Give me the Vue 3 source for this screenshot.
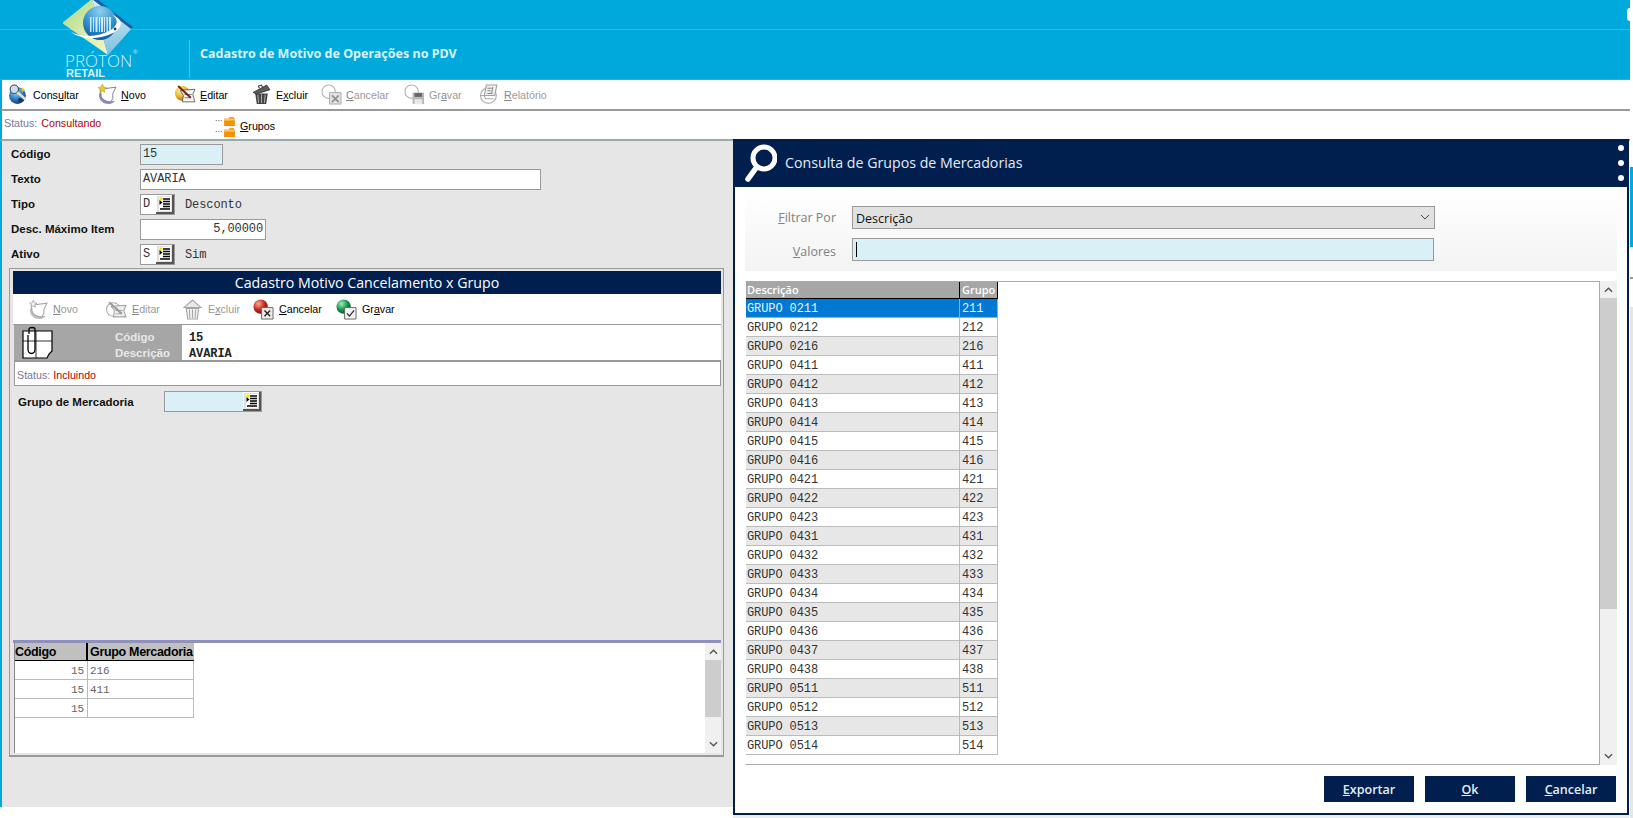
<script setup>
const mainTools = [
  { icon: 'globe', a: 'Cons', u: 'u', b: 'ltar', w: 88 },
  { icon: 'novo', a: '', u: 'N', b: 'ovo', w: 79 },
  { icon: 'edit', a: '', u: 'E', b: 'ditar', w: 76 },
  { icon: 'trash', a: 'E', u: 'x', b: 'cluir', w: 70 },
  { icon: 'gcancel', a: '', u: 'C', b: 'ancelar', w: 83, off: true },
  { icon: 'gsave', a: 'Gr', u: 'a', b: 'var', w: 75, off: true },
  { icon: 'greport', a: '', u: 'R', b: 'elatório', w: 80, off: true }
]
const subTools = [
  { icon: 'gnovo', a: '', u: 'N', b: 'ovo', w: 79, off: true },
  { icon: 'gedit', a: '', u: 'E', b: 'ditar', w: 76, off: true },
  { icon: 'gtrash', a: 'E', u: 'x', b: 'cluir', w: 71, off: true },
  { icon: 'rcancel', a: '', u: 'C', b: 'ancelar', w: 83 },
  { icon: 'gokay', a: 'Gr', u: 'a', b: 'var', w: 75 }
]
const codes = ['211','212','216','411','412','413','414','415','416','421','422','423','431','432','433','434','435','436','437','438','511','512','513','514']
const small = [['15', '216'], ['15', '411'], ['15', '']]
</script>

<template>
  <div class="screen">
    <svg class="defs" width="0" height="0">
      <defs>
        <radialGradient id="gBlue" cx="40%" cy="30%" r="75%"><stop offset="0" stop-color="#9fd0ee"/><stop offset=".55" stop-color="#2c7fc4"/><stop offset="1" stop-color="#12306f"/></radialGradient>
        <radialGradient id="gLogo" cx="50%" cy="15%" r="85%"><stop offset="0" stop-color="#8fd0ee"/><stop offset=".6" stop-color="#2f8fcc"/><stop offset="1" stop-color="#125a9c"/></radialGradient>
        <radialGradient id="gRed" cx="35%" cy="30%" r="75%"><stop offset="0" stop-color="#f3b0a0"/><stop offset=".55" stop-color="#c8281c"/><stop offset="1" stop-color="#6c0f0c"/></radialGradient>
        <radialGradient id="gGreen" cx="35%" cy="30%" r="75%"><stop offset="0" stop-color="#a8e8b8"/><stop offset=".55" stop-color="#149a4c"/><stop offset="1" stop-color="#075028"/></radialGradient>
        <radialGradient id="gYel" cx="35%" cy="30%" r="75%"><stop offset="0" stop-color="#fff0a0"/><stop offset=".6" stop-color="#e8b020"/><stop offset="1" stop-color="#a06a10"/></radialGradient>
        <linearGradient id="gDiaL" x1="0" y1="0" x2="1" y2="1"><stop offset="0" stop-color="#a9d487"/><stop offset=".6" stop-color="#dfeeb0"/><stop offset="1" stop-color="#f2f4c4"/></linearGradient>
        <linearGradient id="gDiaR" x1="0" y1="0" x2="0" y2="1"><stop offset="0" stop-color="#d8eef8"/><stop offset="1" stop-color="#7cc0e0"/></linearGradient>
      </defs>
      <symbol id="globe" viewBox="0 0 20 20">
        <circle cx="9" cy="11" r="8" fill="url(#gBlue)"/>
        <path d="M3 7c2-3 5-3 6-1s-2 3-3 2-2 1-3-1zM10 14c2-1 4 0 4 1s-2 2-3 2-2-2-1-3z" fill="#1a2b66"/>
        <circle cx="6" cy="5" r="4" fill="#cfdde8" stroke="#33445f"/>
        <path d="M9 8l8 7" stroke="#e8e4c8" stroke-width="2.4"/>
        <path d="M14 3l1 2 2 .5-2 .8-1 2-.8-2L11 5.500l2-.5z" fill="#f2c419"/>
      </symbol>
      <symbol id="novo" viewBox="0 0 20 20">
        <path d="M3 9c-1 6 3 10 9 10 3 0 5-1 6-3-4 1-9 0-11-3-1-2-1-4 0-6z" fill="#8d8ac8"/>
        <path d="M4 5l15-2-3 6 0 5-2 3c-4 0-8-2-9-5z" fill="#fff" stroke="#6b6b7c" stroke-width=".8"/>
        <path d="M6 0l1.200 2.800L10 3.500 7.800 5.200 8.300 8 6 6.500 3.700 8l.5-2.800L2 3.500l2.800-.7z" fill="#f2cb25" stroke="#8a7a20" stroke-width=".4"/>
      </symbol>
      <symbol id="edit" viewBox="0 0 20 20">
        <circle cx="7" cy="9" r="7" fill="url(#gYel)"/>
        <path d="M5 6l14-1-2 5 2 7-12 0 1-6z" fill="#f4f4ee" stroke="#555" stroke-width=".8"/>
        <path d="M9 10h7M9 13h6" stroke="#888"/>
        <path d="M3 2l12 11" stroke="#7a2418" stroke-width="2"/>
      </symbol>
      <symbol id="trash" viewBox="0 0 20 20">
        <path d="M4 9h12l-1.500 10h-9z" fill="#444"/>
        <path d="M6.500 10l.7 8M10 10v8M13.500 10l-.7 8" stroke="#aaa"/>
        <path d="M2 8L15 1l3 4.500L5 9.500z" fill="#5c5c5c" stroke="#222" stroke-width=".7"/>
        <path d="M8 4l-1-2 3-1 1 2" fill="none" stroke="#333"/>
      </symbol>
      <symbol id="gcancel" viewBox="0 0 22 22">
        <circle cx="8" cy="8" r="7" fill="none" stroke="#b4b4b4" stroke-width="1.200"/>
        <path d="M9 9h12v12H9z" fill="#e2e2e2" stroke="#a8a8a8"/>
        <path d="M11.500 12l7 7M18.500 12l-7 7" stroke="#8f8f8f" stroke-width="1.800"/>
      </symbol>
      <symbol id="gsave" viewBox="0 0 22 22">
        <circle cx="8" cy="8" r="7" fill="none" stroke="#b4b4b4" stroke-width="1.200"/>
        <path d="M9 9h12v12H9z" fill="#b8b8b8"/>
        <path d="M11 9.500h8v4h-8z" fill="#666"/>
        <path d="M11 16h8v5h-8z" fill="#e8e8e8"/>
      </symbol>
      <symbol id="greport" viewBox="0 0 20 20">
        <circle cx="9" cy="11" r="7.500" fill="none" stroke="#b4b4b4" stroke-width="1.200"/>
        <path d="M1 11h4l1 3h8" fill="none" stroke="#aaa"/>
        <path d="M7 1h10l-2 10H5z" fill="#eee" stroke="#a0a0a0"/>
        <path d="M8 4h4M8 6.500h3M8 9h5M13 3l-1 6" stroke="#8c8c8c"/>
      </symbol>
      <symbol id="gnovo" viewBox="0 0 20 20">
        <path d="M3 9c-1 6 3 10 9 10 3 0 5-1 6-3-4 1-9 0-11-3-1-2-1-4 0-6z" fill="#bdbdbd"/>
        <path d="M4 6l15-2-3 6v4l-2 3c-4 0-8-2-9-5z" fill="#fff" stroke="#a6a6a6"/>
        <path d="M6 1l1 2.500 2.500.5-2 1.500.5 2.500L6 6.500 4 8l.5-2.500-2-1.500L5 3.500z" fill="#f2f2f2" stroke="#a0a0a0" stroke-width=".7"/>
      </symbol>
      <symbol id="gedit" viewBox="0 0 20 20">
        <circle cx="7" cy="10" r="6.500" fill="none" stroke="#aaa"/>
        <path d="M5 7l14-1-2 5 2 6-12 0 1-6z" fill="#eee" stroke="#a4a4a4"/>
        <path d="M9 11h7M9 14h6" stroke="#aaa"/>
        <path d="M3 3l12 11" stroke="#999" stroke-width="2"/>
      </symbol>
      <symbol id="gtrash" viewBox="0 0 20 20">
        <path d="M4 9h12l-1.500 10h-9z" fill="#f2f2f2" stroke="#a5a5a5"/>
        <path d="M7 10l.5 8M10 10v8M13 10l-.5 8" stroke="#a5a5a5"/>
        <path d="M2 8l8-7 8 7z" fill="#e8e8e8" stroke="#a5a5a5"/>
      </symbol>
      <symbol id="rcancel" viewBox="0 0 22 22">
        <circle cx="8" cy="8" r="7.500" fill="url(#gRed)"/>
        <path d="M9 9h12v12H9z" fill="#ececec" stroke="#666"/>
        <path d="M12 12l6 6M18 12l-6 6" stroke="#222" stroke-width="1.400"/>
      </symbol>
      <symbol id="gokay" viewBox="0 0 22 22">
        <circle cx="8" cy="8" r="7.500" fill="url(#gGreen)"/>
        <path d="M9 9h12v12H9z" fill="#f2f2f2" stroke="#666"/>
        <path d="M11.500 15l2.500 3 5-6" fill="none" stroke="#222" stroke-width="1.200"/>
      </symbol>
      <symbol id="lookup" viewBox="0 0 18 19">
        <path d="M0 0h18v19H0z" fill="#e0e0e0"/>
        <path d="M0 0h16v1H1v17H0z" fill="#fff"/>
        <path d="M16 0h2v19H0v-2h16z" fill="#555"/>
        <path d="M3 2h12v14H3z" fill="#fff"/>
        <path d="M3.500 2.500h3v3h-3z" fill="#f2e600"/>
        <path d="M7 4h7M7 6.500h7M7 9h7M7 11.500h7M4 14h10" stroke="#000" stroke-width="1.300"/>
        <path d="M3.500 5l3 2.500-3 2.500z" fill="#000"/>
      </symbol>
      <symbol id="folder" viewBox="0 0 12 10">
        <path d="M0 2h5l1-2h5v3H0z" fill="#f7a818"/>
        <path d="M0 2h12v8H0z" fill="#f58f0a"/>
        <path d="M0 2h12v2H0z" fill="#ffc85a"/>
      </symbol>
    </svg>

    <div class="app">
      <header class="head">
        <div class="logo">
          <svg class="logo-art" viewBox="0 0 80 56" width="80" height="56">
            <path d="M29 -1L-1 23 45 55z" fill="url(#gDiaL)"/>
            <path d="M29 -1L69 28 45 55z" fill="url(#gDiaR)"/>
            <path d="M29 -1L34 -1 70 27 68 29z" fill="#1f5fa8"/>
            <circle cx="37" cy="23" r="17" fill="url(#gLogo)"/>
            <path d="M27 17h1.500v15H27zM30 17h1v15h-1zM32.500 17h2v15h-2zM36 17h1v15h-1zM38 17h2v15h-2zM41 17h1v15h-1zM43.500 17h1.500v15h-1.500zM46 17h2v15h-2z" fill="#e6f2fb" opacity=".85"/>
            <path d="M8 32c10 8 28 8 42 1 10-5 11-14 -1-18 7 4 6 10 -1 15-12 7-28 8-40 2z" fill="#fff"/>
            <circle cx="52" cy="29" r="1.400" fill="#1b3f84"/>
          </svg>
          <span class="proton">PRÓTON</span>
          <span class="reg">®</span>
          <span class="retail">RETAIL</span>
        </div>
        <div class="head-rule"></div>
        <div class="head-title">Cadastro de Motivo de Operações no PDV</div>
      </header>

      <nav class="tools main-tools">
        <div v-for="t in mainTools" :key="t.icon" class="tool" :class="{ off: t.off }" :style="{ width: t.w + 'px' }">
          <svg class="tool-ico"><use :href="'#' + t.icon"/></svg>
          <span>{{ t.a }}<u>{{ t.u }}</u>{{ t.b }}</span>
        </div>
      </nav>

      <div class="status-bar">
        <div class="status"><span class="st-label">Status:</span> <span class="st-val">Consultando</span></div>
        <div class="tree">
          <span class="dots dots1">...</span>
          <span class="dots dots2">...</span>
          <div class="folders">
            <svg class="folder"><use href="#folder"/></svg>
            <svg class="folder"><use href="#folder"/></svg>
          </div>
          <span class="tree-text"><u>G</u>rupos</span>
        </div>
      </div>

      <main class="body">
        <section class="form">
          <div class="frow"><label>Código</label><div class="inp blue w83 mono">15</div></div>
          <div class="frow"><label>Texto</label><div class="inp w401 mono">AVARIA</div></div>
          <div class="frow"><label>Tipo</label>
            <div class="inp w35 mono">D<svg class="lookup"><use href="#lookup"/></svg></div>
            <span class="desc mono">Desconto</span>
          </div>
          <div class="frow"><label>Desc. Máximo Item</label><div class="inp w126 mono right">5,00000</div></div>
          <div class="frow"><label>Ativo</label>
            <div class="inp w35 mono">S<svg class="lookup"><use href="#lookup"/></svg></div>
            <span class="desc mono">Sim</span>
          </div>
        </section>

        <section class="panel">
          <div class="panel-title">Cadastro Motivo Cancelamento x Grupo</div>
          <nav class="tools sub-tools">
            <div v-for="t in subTools" :key="t.icon" class="tool" :class="{ off: t.off }" :style="{ width: t.w + 'px' }">
              <svg class="tool-ico"><use :href="'#' + t.icon"/></svg>
              <span>{{ t.a }}<u>{{ t.u }}</u>{{ t.b }}</span>
            </div>
          </nav>
          <div class="info">
            <div class="info-side">
              <svg class="clip" viewBox="0 0 34 34" width="34" height="34">
                <path d="M2 5h29v20l-3 3-2 4H2z" fill="#fff" stroke="#000" stroke-width="1.200"/>
                <path d="M2 15h29M15 5v27" stroke="#000" stroke-width=".8"/>
                <path d="M8 8V3c0-2 6-2 6 0v20c0 6-7 6-7 0V9" fill="none" stroke="#000" stroke-width="1.300"/>
              </svg>
              <div class="info-labels"><div>Código</div><div>Descrição</div></div>
            </div>
            <div class="info-vals mono"><div>15</div><div>AVARIA</div></div>
          </div>
          <div class="sub-status"><span class="st-label">Status:</span> <span class="st-val">Incluindo</span></div>
          <div class="grp-row">
            <label>Grupo de Mercadoria</label>
            <div class="inp blue w98"><svg class="lookup"><use href="#lookup"/></svg></div>
          </div>
          <div class="small-bar"></div>
          <div class="small-grid">
            <div class="small-table">
              <div class="sg-head"><div class="c1">Código</div><div class="c2">Grupo Mercadoria</div></div>
              <div v-for="(r, i) in small" :key="i" class="sg-row mono">
                <div class="c1">{{ r[0] }}</div><div class="c2">{{ r[1] }}</div>
              </div>
            </div>
            <div class="scroll small-scroll">
              <svg class="chev" viewBox="0 0 10 6"><path d="M1 5l4-4 4 4" fill="none" stroke="#555" stroke-width="1.500"/></svg>
              <div class="thumb t57"></div>
              <svg class="chev end" viewBox="0 0 10 6"><path d="M1 1l4 4 4-4" fill="none" stroke="#555" stroke-width="1.500"/></svg>
            </div>
          </div>
        </section>
      </main>
    </div>

    <aside class="dialog">
      <div class="dlg-title">
        <svg class="mag" viewBox="0 0 32 40" width="32" height="40">
          <circle cx="19" cy="15" r="11" fill="none" stroke="#fff" stroke-width="5"/>
          <path d="M11 25L3 36" stroke="#fff" stroke-width="5.500" stroke-linecap="round"/>
        </svg>
        <span class="dlg-text">Consulta de Grupos de Mercadorias</span>
        <div class="dots3"><i></i><i></i><i></i></div>
      </div>
      <div class="filter">
        <div class="frow2">
          <label><u>F</u>iltrar Por</label>
          <div class="select">Descrição
            <svg class="sel-chev" viewBox="0 0 10 6"><path d="M1 1l4 4 4-4" fill="none" stroke="#444" stroke-width="1"/></svg>
          </div>
        </div>
        <div class="frow2">
          <label class="lower"><u>V</u>alores</label>
          <div class="values"><i class="caret"></i></div>
        </div>
      </div>
      <div class="list-wrap">
        <div class="list">
          <div class="lhead"><div class="l1">Descrição</div><div class="l2">Grupo</div></div>
          <div v-for="(c, i) in codes" :key="c" class="lrow mono" :class="{ sel: i === 0, alt: i > 0 && i % 2 === 0 }">
            <div class="l1">GRUPO 0{{ c }}</div><div class="l2">{{ c }}</div>
          </div>
        </div>
        <div class="scroll list-scroll">
          <svg class="chev" viewBox="0 0 10 6"><path d="M1 5l4-4 4 4" fill="none" stroke="#555" stroke-width="1.500"/></svg>
          <div class="thumb t311"></div>
          <svg class="chev end" viewBox="0 0 10 6"><path d="M1 1l4 4 4-4" fill="none" stroke="#555" stroke-width="1.500"/></svg>
        </div>
      </div>
      <div class="btns">
        <button><u>E</u>xportar</button>
        <button><u>O</u>k</button>
        <button><u>C</u>ancelar</button>
      </div>
    </aside>

    <div class="peek peek-dot"></div>
    <div class="peek peek-blue"></div>
    <div class="peek peek-line"></div>
    <div class="peek peek-gray"></div>
  </div>
</template>

<style>
html, body { margin: 0; background: #fff; }
</style>

<style scoped>
.screen { position: relative; width: 1633px; height: 818px; overflow: hidden; background: #fff; font-family: "Liberation Sans", Arial, sans-serif; font-size: 10.700px; color: #000; }
.defs { position: absolute; }
.mono { font-family: "Liberation Mono", "Courier New", monospace; font-size: 12px; letter-spacing: -0.1px; color: #333; }
.app { width: 1630px; display: flex; flex-direction: column; height: 807px; }

.head { position: relative; height: 79px; background: #00a9dc; display: flex; border-bottom: 1px solid #5a9fb5; flex: none; }
.head::before { content: ""; position: absolute; left: 0; right: 0; top: 29px; height: 1px; background: #2cbbe6; }
.logo { position: relative; width: 189px; flex: none; }
.logo-art { position: absolute; left: 63px; top: 0; }
.proton { position: absolute; left: 65px; top: 54px; font-family: "Open Sans", sans-serif; font-weight: 300; font-size: 17px; line-height: 14px; color: #cfeef8; }
.retail { position: absolute; left: 66px; top: 68px; font-family: "Liberation Sans", sans-serif; font-weight: 700; font-size: 11px; line-height: 10px; color: #d8f2fa; }
.reg { position: absolute; left: 133px; top: 49px; font-size: 6px; color: #cfeef8; }
.head-rule { width: 1px; height: 38px; margin-top: 40px; background: #45c0e6; flex: none; }
.head-title { margin-left: 10px; margin-top: 44px; font-family: "Noto Sans", sans-serif; font-weight: 700; font-size: 12.500px; line-height: 20px; color: #d9f3fb; }

.tools { display: flex; align-items: center; }
.main-tools { height: 29px; background: #fff; border-bottom: 2px solid #999; border-left: 2px solid #00a9dc; padding-left: 6px; flex: none; }
.tool { display: flex; align-items: center; flex: none; white-space: nowrap; color: #000; }
.tool-ico { width: 21px; height: 21px; margin-right: 4px; flex: none; }
.tool.off { color: #9a9a9a; }
.tool.off u { color: #888; }

.status-bar { display: flex; height: 28px; border-left: 2px solid #00a9dc; border-bottom: 2px solid #9aa; flex: none; background: #fff; position: relative; }
.status { width: 211px; padding: 6px 0 0 2px; line-height: 13px; }
.st-label { color: #77779a; }
.st-val { color: #b30000; margin-left: 1px; }
.tree { position: relative; display: flex; }
.dots { position: absolute; left: 0; color: #555; font-size: 9px; line-height: 8px; letter-spacing: 0; }
.dots1 { top: 3px; }
.dots2 { top: 14px; }
.folders { display: flex; flex-direction: column; margin: 6px 0 0 9px; gap: 2px; }
.folder { width: 11px; height: 9px; display: block; }
.tree-text { margin: 9px 0 0 5px; line-height: 13px; }

.body { flex: 1; border-left: 2px solid #00a9dc; background: #e6e6e6; box-sizing: border-box; width: 733px; padding-top: 2px; }
.form { display: flex; flex-direction: column; gap: 4px; padding: 1px 0 0 9px; }
.frow { display: flex; align-items: center; height: 21px; }
.frow label { width: 129px; font-weight: 700; font-size: 11.500px; line-height: 13px; color: #111; flex: none; }
.inp { position: relative; box-sizing: border-box; height: 21px; border: 1px solid #9a9a9a; background: #fff; padding: 0 2px; line-height: 18px; }
.blue { background: #d8f0f6; }
.w83 { width: 83px; }
.w401 { width: 401px; }
.w35 { width: 35px; }
.w126 { width: 126px; }
.w98 { width: 98px; }
.right { text-align: right; line-height: 19px; }
.desc { margin-left: 10px; font-size: 12px; line-height: 18px; padding-top: 1px; }
.lookup { position: absolute; right: 0; top: 0; width: 18px; height: 19px; }

.panel { margin: 3px 0 0 7px; width: 715px; height: 489px; box-sizing: border-box; border: 1px solid #999; border-width: 1px 1px 2px 1px; padding: 2px 2px 0 3px; display: flex; flex-direction: column; position: relative; }
.panel-title { height: 23px; background: #001f4f; color: #fff; text-align: center; font-family: "Open Sans", sans-serif; font-size: 14.200px; line-height: 23px; flex: none; }
.sub-tools { height: 30px; padding-left: 14px; background: #fff; border-bottom: 1px solid #999; flex: none; }
.sub-tools .tool-ico { margin-right: 5px; }
.info { display: flex; height: 37px; background: #fff; border-bottom: 2px solid #999; flex: none; margin-left: 1px; box-sizing: border-box; }
.info-side { width: 168px; background: #a6a6a6; display: flex; position: relative; }
.clip { position: absolute; left: 7px; top: 1px; }
.info-labels { margin-left: 101px; font-weight: 700; font-size: 11.500px; color: #e8e8e8; line-height: 16px; padding-top: 4px; }
.info-vals { padding: 5px 0 0 7px; line-height: 16px; font-weight: 700; color: #222; }
.sub-status { height: 24px; box-sizing: border-box; margin-left: 1px; background: #fff; border: 1px solid #999; border-top: none; padding: 7px 0 0 2px; line-height: 13px; flex: none; }
.sub-status .st-val { margin-left: 0; }
.grp-row { display: flex; align-items: center; height: 21px; margin: 5px 0 0 5px; flex: none; }
.grp-row label { width: 146px; font-weight: 700; font-size: 11.500px; color: #111; }
.grp-row .lookup { right: 0; top: 0; }
.small-bar { height: 3px; background: #9090bf; margin-top: 228px; flex: none; }
.small-grid { display: flex; height: 110px; flex: none; background: #fff; margin-left: 1px; border-left: 1px solid #888; }
.small-table { width: 690px; }
.sg-head { display: flex; height: 17px; background: #c0c0c0; width: 179px; border-bottom: 1px solid #000; }
.sg-head .c1 { width: 73px; border-right: 2px solid #000; box-sizing: border-box; padding-left: 0; }
.sg-head .c2 { width: 106px; padding-left: 2px; box-sizing: border-box; }
.sg-head div { font-weight: 700; font-size: 12.500px; line-height: 18px; white-space: nowrap; overflow: hidden; letter-spacing: -.32px; }
.sg-row { display: flex; height: 19px; width: 179px; border-bottom: 1px solid #bbb; box-sizing: border-box; border-right: 1px solid #bbb; font-size: 11px; color: #666; line-height: 21px; }
.sg-row .c1 { width: 73px; border-right: 1px solid #bbb; text-align: right; padding-right: 3px; box-sizing: border-box; }
.sg-row .c2 { padding-left: 2px; }

.scroll { position: relative; background: #f0f0f0; display: flex; flex-direction: column; align-items: center; flex: none; }
.small-scroll { width: 16px; }
.list-scroll { width: 17px; height: 484px; }
.chev { width: 9px; height: 6px; margin-top: 6px; flex: none; }
.chev.end { margin-top: auto; margin-bottom: 6px; }
.thumb { width: 100%; background: #cdcdcd; flex: none; }
.t57 { height: 57px; margin-top: 5px; }
.t311 { height: 311px; margin-top: 5px; }

.dialog { position: absolute; left: 733px; top: 139px; width: 896px; height: 676px; box-sizing: border-box; border: 2px solid #001f4f; border-top: none; background: #fff; box-shadow: 0 3px 0 #e8edf0; display: flex; flex-direction: column; }
.dlg-title { position: relative; height: 48px; background: #001f4f; color: #e6edf5; display: flex; align-items: center; font-family: "Open Sans", sans-serif; font-size: 14.200px; flex: none; }
.dlg-text { padding-bottom: 2px; }
.mag { margin: 0 8px 0 10px; flex: none; }
.dots3 { position: absolute; right: 3px; top: 6px; display: flex; flex-direction: column; gap: 9px; }
.dots3 i { display: block; width: 6px; height: 6px; border-radius: 50%; background: #fff; }
.filter { margin: 3px 10px 0 10px; height: 81px; box-sizing: border-box; padding-top: 16px; display: flex; flex-direction: column; gap: 9px; background: linear-gradient(#fff, #f3f3f4); flex: none; }
.frow2 { display: flex; height: 23px; }
.frow2 label { width: 107px; padding-right: 16px; box-sizing: border-box; text-align: right; font-family: "Open Sans", sans-serif; font-size: 12.500px; color: #808080; line-height: 24px; flex: none; white-space: nowrap; }
.frow2 label.lower { line-height: 27px; }
.select { position: relative; width: 583px; box-sizing: border-box; border: 1px solid #9a9a9a; background: #e1e1e1; font-family: "Open Sans", sans-serif; font-size: 12.500px; line-height: 23px; padding-left: 3px; color: #111; }
.sel-chev { position: absolute; right: 4px; top: 7px; width: 10px; height: 6px; }
.values { width: 582px; box-sizing: border-box; border: 1px solid #9a9a9a; background: #d8f0f6; position: relative; }
.caret { position: absolute; left: 3px; top: 3px; width: 1px; height: 15px; background: #000; }
.list-wrap { display: flex; margin: 10px 10px 0 10px; flex: none; }
.list { width: 855px; height: 484px; box-sizing: border-box; border: 1px solid #aaa; border-left-color: #fff; overflow: hidden; }
.lhead { display: flex; height: 17px; }
.lhead div { background: #a6a6a6; color: #fff; font-family: "Open Sans", sans-serif; font-weight: 600; font-size: 11px; line-height: 16px; box-sizing: border-box; border-bottom: 1px solid #000; white-space: nowrap; overflow: hidden; }
.l1 { width: 214px; padding-left: 1px; box-sizing: border-box; flex: none; }
.lhead .l1 { border-right: 1px solid #000; }
.l2 { width: 38px; padding-left: 2px; box-sizing: border-box; flex: none; border-right: 1px solid #bbb; }
.lhead .l2 { border-right: 1px solid #000; }
.lrow { display: flex; height: 19px; line-height: 20px; width: 252px; box-sizing: border-box; border-bottom: 1px solid #bbb; background: #fff; }
.lrow .l1 { border-right: 1px solid #bbb; }
.lrow.alt { background: #e7e7e7; }
.lrow.sel { background: #0078d4; color: #e8f4fc; border-bottom-color: #7ab8e8; }
.lrow.sel .l1, .lrow.sel .l2 { border-right-color: #7ab8e8; }
.btns { display: flex; justify-content: flex-end; gap: 11px; margin: 11px 11px 0 0; flex: none; }
.btns button { width: 90px; height: 26px; padding: 0; border: none; border-radius: 0; background: #001f4f; color: #e6edf5; font-family: "Open Sans", sans-serif; font-weight: 600; font-size: 12.500px; }

.peek { position: absolute; left: 1630px; width: 3px; }
.peek-dot { left: 1627px; width: 6px; top: 8px; height: 13px; background: #fff; border-radius: 3px 0 0 3px; }
.peek-blue { top: 167px; height: 80px; background: #00a9dc; }
.peek-line { top: 277px; height: 2px; background: #999; }
.peek-gray { top: 307px; height: 511px; background: #e6e6e6; }
</style>
